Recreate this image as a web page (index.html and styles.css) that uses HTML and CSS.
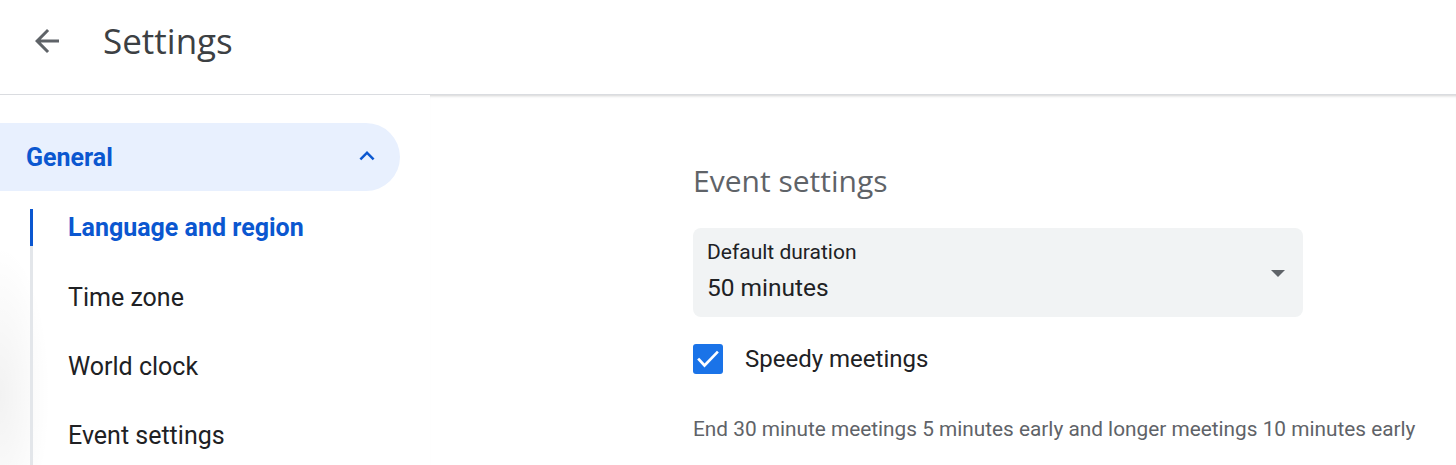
FILE: index.html
```html
<!DOCTYPE html>
<html>
<head>
<meta charset="utf-8">
<link rel="stylesheet" href="styles.css">
</head>
<body>
<header class="topbar">
  <button class="back" aria-label="Back">
    <svg width="28" height="28" viewBox="0 0 24 24"><path d="M20 11H7.83l5.59-5.59L12 4l-8 8 8 8 1.41-1.41L7.83 13H20v-2z" fill="#5f6368"/></svg>
  </button>
  <h1 class="title">Settings</h1>
</header>
<div class="page">
  <nav class="sidebar">
    <div class="group-head">
      <span class="group-label">General</span>
      <svg class="chev" width="24" height="24" viewBox="0 0 24 24"><path d="M7.41 15.41L12 10.83l4.59 4.58L18 14l-6-6-6 6z" fill="#0b57d0"/></svg>
    </div>
    <ul class="sub">
      <li class="item active">Language and region</li>
      <li class="item">Time zone</li>
      <li class="item">World clock</li>
      <li class="item">Event settings</li>
    </ul>
  </nav>
  <main class="content">
    <h2 class="section-title">Event settings</h2>
    <div class="select">
      <div class="select-text">
        <div class="select-label">Default duration</div>
        <div class="select-value">50 minutes</div>
      </div>
      <span class="caret"></span>
    </div>
    <label class="check-row">
      <span class="checkbox">
        <svg width="30" height="30" viewBox="0 0 30 30"><polyline points="6,15.5 11.5,21.5 24,8.5" fill="none" stroke="#fff" stroke-width="2.6" stroke-linecap="square"/></svg>
      </span>
      <span class="check-label">Speedy meetings</span>
    </label>
    <p class="desc">End 30 minute meetings 5 minutes early and longer meetings 10 minutes early</p>
  </main>
</div>
</body>
</html>
```
FILE: styles.css
```css
* { box-sizing: border-box; }
html, body { margin: 0; padding: 0; background: #fff; }
body { font-family: Roboto, "Liberation Sans", sans-serif; color: #202124; overflow: hidden; height: 465px; }

.topbar {
  height: 95px;
  display: flex;
  align-items: center;
  border-bottom: 1px solid #dadce0;
  padding-left: 26px;
}
.back {
  border: 0; background: none; padding: 0;
  width: 42px; height: 42px;
  display: flex; align-items: center; justify-content: center;
  margin-top: -13px;
}
.back svg { width: 36px; height: 36px; }
.title {
  margin: -13px 0 0 35px;
  font-family: "Open Sans", sans-serif;
  font-weight: 400;
  font-size: 35px;
  color: #3c4043;
}

.page { display: flex; height: 370px; }
.sidebar {
  width: 430px; flex: none; padding-top: 28px;
  background: radial-gradient(ellipse 50px 150px at 0 300px, rgba(0,0,0,0.05), rgba(0,0,0,0));
}
.group-head {
  width: 400px; height: 68px;
  background: #e8f0fe;
  border-radius: 0 34px 34px 0;
  display: flex; align-items: center; justify-content: space-between;
  padding: 0 18px 0 26px;
}
.group-label { font-size: 25px; font-weight: 700; color: #0b57d0; }
.chev { width: 30px; height: 30px; margin-top: -2px; }

.sub {
  list-style: none; margin: 18px 0 0 30px; padding: 0;
  border-left: 3px solid #e3e6ea;
}
.item {
  height: 69px;
  display: flex; align-items: center;
  padding-left: 35px;
  font-size: 25px; color: #202124;
  margin-left: -3px;
  border-left: 3px solid transparent;
}
.item.active {
  color: #0b57d0; font-weight: 700;
  height: 37px;
  margin-bottom: 17px;
  border-left-color: #0b57d0;
}

.content {
  flex: 1;
  padding-left: 263px;
  padding-top: 66px;
  box-shadow: inset 0 3px 3px -2px rgba(0,0,0,0.18);
}
.section-title {
  margin: 0;
  font-family: "Open Sans", sans-serif;
  font-weight: 400;
  font-size: 30px;
  color: #5f6368;
  line-height: 40px;
}
.select {
  margin-top: 27px;
  width: 610px; height: 89px;
  background: #f1f3f4;
  border-radius: 8px;
  display: flex; align-items: center; justify-content: space-between;
  padding: 0 18px 0 14px;
}
.select-label { font-size: 21px; line-height: 26px; color: #202124; margin-top: -4px; }
.select-value { font-size: 24.5px; line-height: 30px; color: #202124; margin-top: 8px; }
.caret {
  width: 0; height: 0;
  border-left: 7px solid transparent;
  border-right: 7px solid transparent;
  border-top: 7px solid #5f6368;
  margin-top: 2px;
}
.check-row {
  margin-top: 27px;
  display: flex; align-items: center;
}
.checkbox {
  width: 30px; height: 30px;
  background: #1a73e8;
  border-radius: 3px;
  display: flex; align-items: center; justify-content: center;
}
.check-label { margin-left: 22px; font-size: 24px; color: #202124; }
.desc {
  margin: 43px 0 0 0;
  font-size: 20.8px;
  color: #5f6368;
}
```
